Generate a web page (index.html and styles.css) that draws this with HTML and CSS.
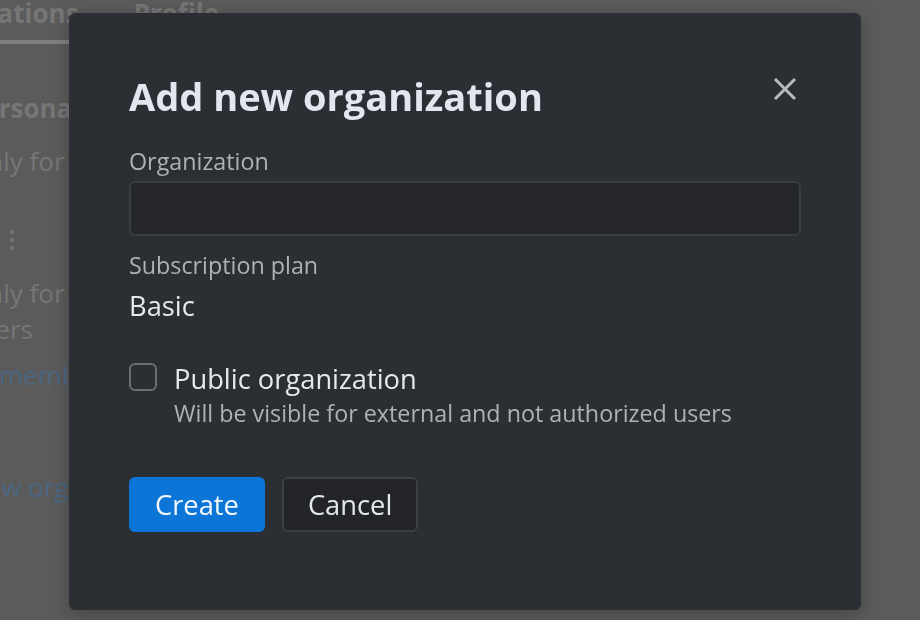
FILE: index.html
```html
<!DOCTYPE html>
<html lang="en">
<head>
<meta charset="utf-8">
<title>Add new organization</title>
<link rel="stylesheet" href="styles.css">
</head>
<body>
<div class="page">
  <nav class="tabs">
    <span class="tab tab-active">Organizations</span>
    <span class="tab">Profile</span>
  </nav>
  <section class="orgs">
    <div class="org">
      <div class="org-name">Personal</div>
      <div class="org-desc">Only for you</div>
    </div>
    <div class="org">
      <div class="org-menu"><span></span><span></span><span></span></div>
      <div class="org-desc">Only for invited<br>users</div>
      <div class="org-link">Edit members</div>
    </div>
    <div class="org-new">New organization</div>
  </section>
</div>

<div class="backdrop"></div>

<div class="modal" role="dialog" aria-labelledby="dlg-title">
  <div class="modal-head">
    <h2 id="dlg-title" class="modal-title">Add new organization</h2>
    <button class="close" aria-label="Close">
      <svg width="24" height="24" viewBox="0 0 24 24"><path d="M2 2 L22 22 M22 2 L2 22" stroke="currentColor" stroke-width="3" stroke-linecap="butt"/></svg>
    </button>
  </div>
  <label class="field-label" for="org">Organization</label>
  <input id="org" class="input" type="text">
  <div class="field-label plan-label">Subscription plan</div>
  <div class="plan">Basic</div>
  <div class="check-row">
    <span class="checkbox"></span>
    <div class="check-text">
      <div class="check-title">Public organization</div>
      <div class="check-desc">Will be visible for external and not authorized users</div>
    </div>
  </div>
  <div class="actions">
    <button class="btn btn-primary">Create</button>
    <button class="btn btn-secondary">Cancel</button>
  </div>
</div>
</body>
</html>
```

FILE: styles.css
```css
html, body {
  margin: 0;
  padding: 0;
  height: 100%;
}
body {
  background: #5b5b5b;
  font-family: "Open Sans", "Noto Sans", sans-serif;
  overflow: hidden;
}
.page {
  margin-left: -33px;
  color: #767676;
}
.tabs {
  display: flex;
  gap: 55px;
  height: 43px;
  align-items: flex-start;
  margin-left: -70px;
}
.tab {
  font-size: 26px;
  font-weight: 700;
  line-height: 30px;
  margin-top: -2px;
}
.tab-active {
  border-bottom: 4px solid #808080;
  padding-bottom: 12px;
}
.orgs {
  padding-top: 47px;
  font-size: 26px;
}
.org-name {
  font-weight: 700;
  line-height: 36px;
}
.org-desc {
  line-height: 36px;
  margin-top: 17px;
}
.org-menu {
  display: flex;
  flex-direction: column;
  gap: 4px;
  margin: 51px 0 0 43px;
}
.org-menu span {
  width: 4px;
  height: 4px;
  border-radius: 50%;
  background: #767676;
}
.org + .org .org-desc {
  margin-top: 25px;
}
.org-link {
  color: #4b6680;
  line-height: 36px;
  margin-top: 10px;
  margin-left: -21px;
}
.org-new {
  color: #4b6680;
  line-height: 36px;
  margin-top: 76px;
}

.backdrop {
  position: fixed;
  inset: 0;
  background: transparent;
}

.modal {
  position: absolute;
  left: 69px;
  top: 13px;
  width: 672px;
  padding: 59px 60px 78px 60px;
  background: #2b2e33;
  border-radius: 6px;
  box-shadow: 0 4px 18px rgba(0, 0, 0, 0.25);
  color: #e4e7ec;
}
.modal-head {
  display: flex;
  justify-content: space-between;
  align-items: flex-start;
}
.modal-title {
  margin: 0;
  font-size: 38px;
  line-height: 48px;
  font-weight: 700;
  color: #e2e7ef;
}
.close {
  background: none;
  border: 0;
  padding: 0;
  margin: 5px 4px 0 0;
  width: 24px;
  height: 24px;
  color: #b8babd;
  cursor: pointer;
}
.close svg {
  display: block;
}
.field-label {
  display: block;
  margin-top: 26px;
  font-size: 23.3px;
  line-height: 30px;
  color: #aeb1b6;
}
.input {
  display: block;
  box-sizing: border-box;
  width: 100%;
  height: 55px;
  margin-top: 5px;
  background: #24262b;
  border: 2px solid #393c41;
  border-radius: 6px;
  color: #e4e7ec;
  font: inherit;
}
.plan-label {
  margin-top: 14px;
}
.plan {
  margin-top: 8px;
  font-size: 27.3px;
  line-height: 36px;
  color: #e6e8eb;
}
.check-row {
  display: flex;
  gap: 17px;
  margin-top: 35px;
}
.checkbox {
  box-sizing: border-box;
  width: 28px;
  height: 28px;
  margin-top: 4px;
  border: 2px solid #6a6d72;
  border-radius: 6px;
  flex: none;
}
.check-title {
  font-size: 27.3px;
  line-height: 39px;
  color: #e6e8eb;
}
.check-desc {
  font-size: 23.3px;
  line-height: 30px;
  color: #aeb1b6;
}
.actions {
  display: flex;
  gap: 17px;
  margin-top: 49px;
}
.btn {
  box-sizing: border-box;
  height: 55px;
  border-radius: 6px;
  font: inherit;
  font-size: 27.3px;
  cursor: pointer;
}
.btn-primary {
  padding: 0 26px;
  background: #0b76d8;
  border: 0;
  color: #f4f8fc;
}
.btn-secondary {
  padding: 0 24px;
  background: #222428;
  border: 2px solid #3c3f44;
  color: #e4e7ec;
}
```
